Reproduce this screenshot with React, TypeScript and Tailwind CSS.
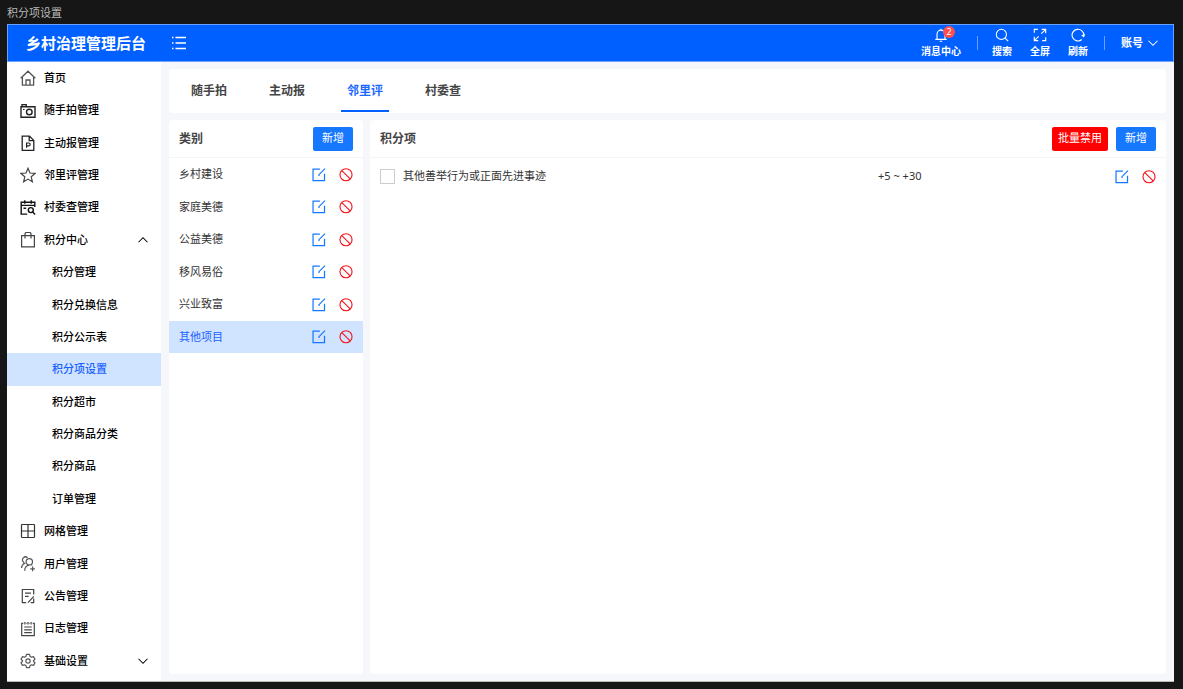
import React, { useState } from "react";
import clsx from "clsx";

interface IconProps {
  className?: string;
  children?: React.ReactNode;
}

function Icon({ className = "size-4", children }: IconProps) {
  return (
    <svg
      viewBox="0 0 16 16"
      fill="none"
      stroke="currentColor"
      className={clsx("shrink-0", className)}
      aria-hidden="true"
    >
      {children}
    </svg>
  );
}

const icons: Record<string, React.ReactNode> = {
  home: (
    <Icon className="size-4 text-[#555]">
      <path d="M.7 8.3 8 1.2l7.3 7.1M2.4 7.2v7.9h11.2V7.2M6 15V10h4v5" strokeWidth="1.3" />
    </Icon>
  ),
  camera: (
    <Icon className="size-4 text-[#222]">
      <path d="M1 3.8h14v10.4H1zM2 3.6V1.6h4.2v2" strokeWidth="1.4" />
      <circle cx="9.3" cy="9" r="2.8" strokeWidth="1.4" />
      <path d="M3 6.5h1.6" />
    </Icon>
  ),
  report: (
    <Icon className="size-4 text-[#222]">
      <path d="M2.2 1.2h7.3l4.3 4.2v9.9H2.2zM9.2 1.2v4.5h4.6" strokeWidth="1.3" />
      <path d="M6.6 12.8V8h2.1a1.4 1.4 0 0 1 0 2.9H6.6" strokeWidth="1.2" />
    </Icon>
  ),
  star: (
    <Icon className="size-4 text-[#444]">
      <path d="m8 1.3 2 4.7 5.1.4-3.9 3.4 1.2 5L8 12.1l-4.4 2.7 1.2-5L.9 6.4 6 6z" strokeWidth="1.2" />
    </Icon>
  ),
  inspect: (
    <Icon className="size-4 text-[#111]">
      <path d="M14.8 7V2.2H1.2v11.9h6M1.2 5.4h13.6M4.8.2v3.6M11.2.2v3.6M3.5 8.2h2.6" strokeWidth="1.4" />
      <circle cx="10.8" cy="10.1" r="2.5" strokeWidth="1.4" />
      <path d="m12.7 12 2.4 2.4" strokeWidth="1.4" />
    </Icon>
  ),
  bag: (
    <Icon className="size-4 text-[#444]">
      <path d="M1.6 3.6h12.8v11.3H1.6zM5 6.500V2.100A1.800 1.800 0 0 1 6.800.4h2.400A1.800 1.800 0 0 1 11 2.100v4.400" strokeWidth="1.2" />
    </Icon>
  ),
  grid: (
    <Icon className="size-4 text-[#333]">
      <rect x="1.500" y="1.500" width="13" height="13" rx=".8" strokeWidth="1.2" />
      <path d="M8 1.500v13M1.500 8h13" strokeWidth="1.2" />
    </Icon>
  ),
  user: (
    <Icon className="size-4 text-[#555]">
      <circle cx="9.300" cy="5.800" r="3.200" strokeWidth="1.2" />
      <path d="M4.700 14.800c0-3 1.900-5.300 4.600-5.700M12.600 10.600v4.600M10.300 12.900h4.600M11.200 8.600l1 .8M7.600 1.700A3 3 0 0 0 3.600 6.200c.2.600.5 1 .9 1.300C2.600 8.300 1.600 9.800 1.500 12" strokeWidth="1.2" />
    </Icon>
  ),
  notice: (
    <Icon className="size-4 text-[#444]">
      <path d="M6.200 14.600H2.300V1.500h11.400v5M5 5.200h6M5 8.400h3.600M8 14.600l5.800-6.200M13.700 10.500v4.100h-3" strokeWidth="1.2" />
    </Icon>
  ),
  log: (
    <Icon className="size-4 text-[#444]">
      <path d="M3.300 2.400H1.700v12.300h12.600V2.400h-1.600M4.900 1v2.400M8 1v2.400M11.100 1v2.400M6.200 2.400h.5M9.300 2.400h.5M4.200 6h7.600M4.200 8.800h7.600M4.200 11.600h7.600" strokeWidth="1.2" />
    </Icon>
  ),
  gear: (
    <Icon className="size-4 text-[#555]">
      <path d="m6.500 1.300-.5 2-1.500.9-2-.6L1 6.200l1.500 1.400v.8L1 9.800l1.500 2.600 2-.6 1.500.9.5 2h3l.5-2 1.500-.9 2 .6L15 9.800l-1.500-1.400v-.8L15 6.200l-1.500-2.600-2 .6-1.500-.9-.5-2z" strokeWidth="1.200" strokeLinejoin="round" />
      <circle cx="8" cy="8" r="2.200" strokeWidth="1.200" />
    </Icon>
  ),
};

interface MenuItem {
  label: string;
  icon?: string;
  arrow?: "up" | "down";
}

const menu: MenuItem[] = [
  { label: "首页", icon: "home" },
  { label: "随手拍管理", icon: "camera" },
  { label: "主动报管理", icon: "report" },
  { label: "邻里评管理", icon: "star" },
  { label: "村委查管理", icon: "inspect" },
  { label: "积分中心", icon: "bag", arrow: "up" },
  { label: "积分管理" },
  { label: "积分兑换信息" },
  { label: "积分公示表" },
  { label: "积分项设置" },
  { label: "积分超市" },
  { label: "积分商品分类" },
  { label: "积分商品" },
  { label: "订单管理" },
  { label: "网格管理", icon: "grid" },
  { label: "用户管理", icon: "user" },
  { label: "公告管理", icon: "notice" },
  { label: "日志管理", icon: "log" },
  { label: "基础设置", icon: "gear", arrow: "down" },
];

const tabs = ["随手拍", "主动报", "邻里评", "村委查"];
const categories = ["乡村建设", "家庭美德", "公益美德", "移风易俗", "兴业致富", "其他项目"];

function Chevron({ up = false }: { up?: boolean }) {
  return (
    <Icon className="size-3">
      <path d={up ? "M2 11l6-6 6 6" : "M2 5l6 6 6-6"} strokeWidth="1.400" />
    </Icon>
  );
}

function HeaderAction({ label, children }: { label: string; children: React.ReactNode }) {
  return (
    <button type="button" className="flex flex-col items-center gap-0.5">
      {children}
      <span className="text-[10px] leading-3.5 font-bold">{label}</span>
    </button>
  );
}

function Header() {
  return (
    <header className="flex h-[38px] shrink-0 items-center border border-[#6ba2ff] bg-[#0060ff] pr-3.5 text-white">
      <h1 className="w-[163px] pl-[18px] text-[15px] leading-5 font-bold">乡村治理管理后台</h1>
      <button type="button" aria-label="折叠菜单">
        <Icon>
          <path d="M4.500 2.500H15M4.500 8H15M4.500 13.500H15M1 2.500h1.500M1 8h1.500M1 13.500h1.500" strokeWidth="1.300" />
        </Icon>
      </button>

      <nav className="ml-auto flex items-center">
        <div className="relative">
          <HeaderAction label="消息中心">
            <Icon className="size-3.5">
              <path d="M1.500 13h13M3.500 13V7a4.500 4.500 0 0 1 9 0v6M8 2.500V.8M6.500 15.200h3" strokeWidth="1.300" />
            </Icon>
          </HeaderAction>
          <span className="absolute -top-0.5 left-[22px] size-3 rounded-full bg-[#ff4d4f] text-center text-[9px] leading-3">
            2
          </span>
        </div>
        <span className="mr-3.5 ml-4 h-3.5 w-px bg-[#6ba2ff]" />
        <div className="flex gap-[18px]">
          <HeaderAction label="搜索">
            <Icon className="size-3.5">
              <circle cx="7.300" cy="7.300" r="5.800" strokeWidth="1.200" />
              <path d="m11.500 11.500 3.500 3.500" strokeWidth="1.200" />
            </Icon>
          </HeaderAction>
          <HeaderAction label="全屏">
            <Icon className="size-3.5">
              <path d="M5.500 1.500h-4v4M10 1.500h4.500V6M9.500 6.500l5-5M1.500 10v4.500H6M1.500 14.500l5-5M10.500 14.500h4v-4" strokeWidth="1.300" />
            </Icon>
          </HeaderAction>
          <HeaderAction label="刷新">
            <Icon className="size-3.5">
              <path d="M12.300 13.200A6.700 6.700 0 1 1 14.600 8.800M12.200 8l2.300 1.800L15.600 7" strokeWidth="1.300" />
            </Icon>
          </HeaderAction>
        </div>
        <span className="mx-4 h-3.5 w-px bg-[#6ba2ff]" />
        <button type="button" className="flex items-center gap-1 text-[11px] font-bold">
          账号
          <Chevron />
        </button>
      </nav>
    </header>
  );
}

function Sidebar() {
  return (
    <nav className="flex w-[154px] shrink-0 flex-col bg-white pb-1 text-[11px] font-medium text-black">
      {menu.map((item) => (
        <a
          key={item.label}
          href="#"
          className={clsx(
            "flex flex-1 items-center gap-2 pr-3",
            item.icon ? "pl-[13px]" : "pl-[45px]",
            item.label === "积分项设置" && "bg-[#d0e3ff] text-[#1a62ff]"
          )}
        >
          {item.icon && icons[item.icon]}
          <span className="flex-1">{item.label}</span>
          {item.arrow && <Chevron up={item.arrow === "up"} />}
        </a>
      ))}
    </nav>
  );
}

function RowActions({ name }: { name: string }) {
  return (
    <div className="flex gap-[13px]">
      <button type="button" aria-label={`编辑${name}`} className="text-[#1677ff]">
        <Icon className="size-3.5">
          <path d="M9 1.200H1.200v13.100h13.100V6.500M14.900.7 8 7.600v1.600" strokeWidth="1.400" />
        </Icon>
      </button>
      <button type="button" aria-label={`禁用${name}`} className="text-[#f5141c]">
        <Icon className="size-3.5">
          <circle cx="8" cy="7.700" r="6.900" strokeWidth="1.300" />
          <path d="m3.200 2.900 9.600 9.600" strokeWidth="1.300" />
        </Icon>
      </button>
    </div>
  );
}

function Button({ danger = false, children }: { danger?: boolean; children: React.ReactNode }) {
  return (
    <button
      type="button"
      className={clsx(
        "h-6 rounded-xs text-[11px] text-white",
        danger ? "bg-[#ff0000] px-1.5" : "bg-[#1677ff] px-[9px]"
      )}
    >
      {children}
    </button>
  );
}

function CardHeader({ title, children }: { title: string; children: React.ReactNode }) {
  return (
    <div className="flex h-[38px] items-center justify-between border-b border-[#f3f4f6] px-2.5">
      <h2 className="text-xs font-bold text-[#444]">{title}</h2>
      <div className="flex gap-2">{children}</div>
    </div>
  );
}

export default function App() {
  const [tab, setTab] = useState("邻里评");
  const [category, setCategory] = useState("其他项目");

  return (
    <div
      lang="zh-CN"
      className="flex h-screen flex-col bg-[#161616] pr-[9px] pb-[7px] pl-[7px] font-['Noto_Sans','Noto_Sans_CJK_SC',sans-serif]"
    >
      <div className="h-6 shrink-0 pt-1 text-[11px] leading-[18px] text-[#b8b8b8]">积分项设置</div>

      <div className="flex min-h-0 flex-1 flex-col border-b border-[#bbb]">
        <Header />
        <div className="flex min-h-0 flex-1 bg-[#f5f7fa]">
          <Sidebar />

          <main className="flex min-w-0 flex-1 flex-col gap-[7px] px-2 py-[7px]">
            <div role="tablist" className="flex h-11 shrink-0 gap-[30px] rounded-sm bg-white px-4 pb-px">
              {tabs.map((t) => (
                <button
                  key={t}
                  type="button"
                  role="tab"
                  aria-selected={t === tab}
                  onClick={() => setTab(t)}
                  className={clsx(
                    "w-12 border-b-2 pt-0.5 text-xs font-bold",
                    t === tab ? "border-[#0060ff] text-[#1a68ff]" : "border-transparent text-[#444]"
                  )}
                >
                  {t}
                </button>
              ))}
            </div>

            <div className="flex min-h-0 flex-1 gap-[7px]">
              <section className="w-[194px] shrink-0 rounded-sm bg-white">
                <CardHeader title="类别">
                  <Button>新增</Button>
                </CardHeader>
                <ul className="text-[11px] text-[#333]">
                  {categories.map((c) => (
                    <li
                      key={c}
                      onClick={() => setCategory(c)}
                      className={clsx(
                        "flex items-center justify-between px-2.5 odd:h-[33px] even:h-8",
                        c === category && "bg-[#d0e3ff] text-[#1a62ff]"
                      )}
                    >
                      {c}
                      <RowActions name={c} />
                    </li>
                  ))}
                </ul>
              </section>

              <section className="min-w-0 flex-1 rounded-sm bg-white">
                <CardHeader title="积分项">
                  <Button danger>批量禁用</Button>
                  <Button>新增</Button>
                </CardHeader>
                <div className="flex h-[37px] items-center px-2.5 text-[11px] text-[#333]">
                  <label className="flex flex-1 items-center gap-2">
                    <input
                      type="checkbox"
                      className="size-[15px] appearance-none border border-[#ccc] bg-white checked:bg-[#1677ff]"
                    />
                    其他善举行为或正面先进事迹
                  </label>
                  <span className="w-[237px]">+5 ~ +30</span>
                  <RowActions name="其他善举行为或正面先进事迹" />
                </div>
              </section>
            </div>
          </main>
        </div>
      </div>
    </div>
  );
}
